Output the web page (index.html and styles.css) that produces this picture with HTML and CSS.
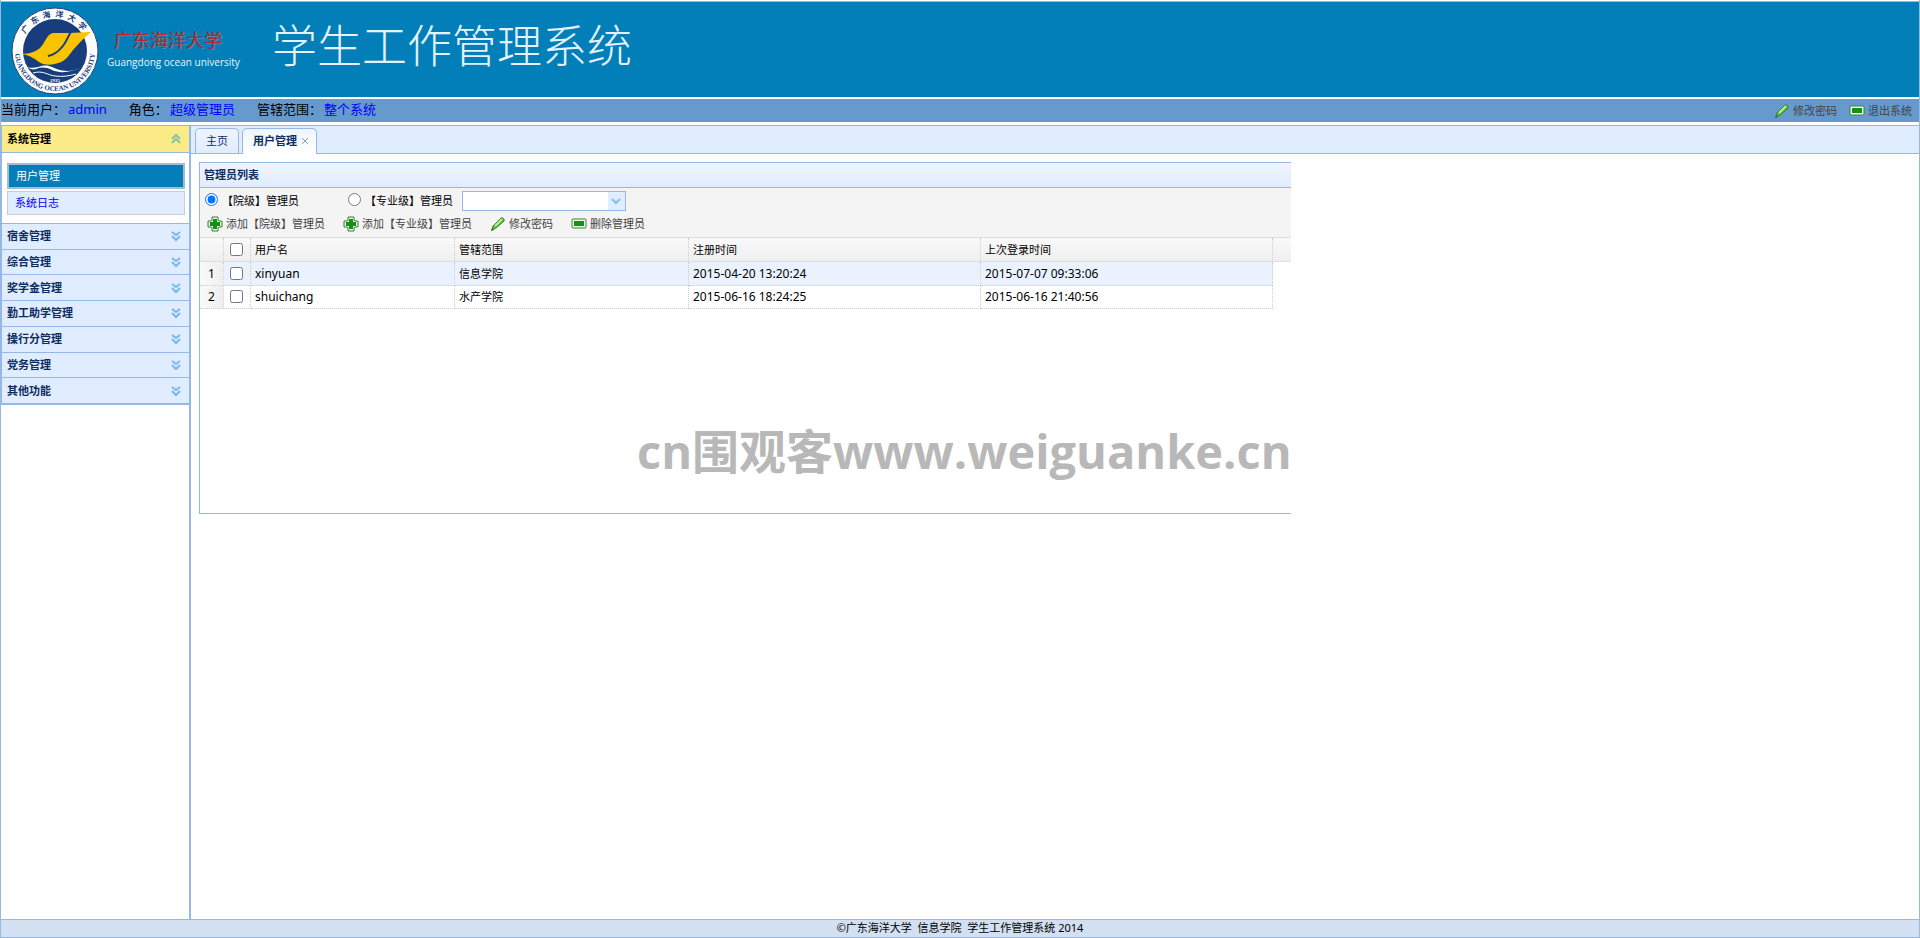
FILE: index.html
```html
<!DOCTYPE html>
<html lang="zh-CN">
<head>
    <meta charset="UTF-8">
    <meta name="viewport" content="width=device-width, initial-scale=1.0">
    <title>学生工作管理系统</title>
    <link rel="stylesheet" href="styles.css">
</head>
<body>
    <!-- shared icons -->
    <svg class="sprite" aria-hidden="true">
        <symbol id="icon-add" viewBox="0 0 16 16">
            <path d="M5 1h6v3l1 1h3v6h-3l-1 1v3H5v-3l-1-1H1V5h3l1-1z" fill="#e4f3e2" stroke="#3b7f3f"/>
            <path d="M6 3h4v3h3v4h-3v3H6v-3H3V6h3z" fill="#129312"/>
        </symbol>
        <symbol id="icon-edit" viewBox="0 0 16 16">
            <path d="M2 14l1-4 8-8c1-1 4 1 3 3l-8 7z" fill="#5cc43a" stroke="#2f7d26"/>
            <path d="M5 10l7-7" stroke="#b9f08c" stroke-width="2"/>
            <path d="M1 15l1-3 2 2z" fill="#555"/>
        </symbol>
        <symbol id="icon-remove" viewBox="0 0 16 16">
            <rect x="1" y="3" width="14" height="9" rx="1" fill="#eef8ec" stroke="#3b7f3f"/>
            <rect x="3" y="5" width="10" height="5" fill="#129312"/>
        </symbol>
        <symbol id="icon-expand" viewBox="0 0 16 16">
            <path d="M4 4l4 3 4-3M4 8l4 4 4-4" fill="none" stroke="#78b8f0" stroke-width="2"/>
        </symbol>
        <symbol id="icon-collapse" viewBox="0 0 16 16">
            <path d="M4 8l4-4 4 4M4 12l4-4 4 4" fill="none" stroke="#8bbfa9" stroke-width="2"/>
        </symbol>
    </svg>

    <header class="banner">
        <svg class="logo" viewBox="0 0 88 88" role="img" aria-label="广东海洋大学">
            <defs>
                <path id="arc-top" d="M10 44a34 34 0 0 1 68 0"/>
                <path id="arc-bottom" d="M4 44a40 40 0 0 0 80 0"/>
            </defs>
            <circle cx="44" cy="44" r="43" fill="#fff" stroke="#23477f"/>
            <circle cx="44" cy="44" r="32" fill="#183d7d"/>
            <path d="M5 46c10 2 18 0 24-5 5-5 7-14 13-15h16l22-1c-6 5-12 11-18 18-5 7-9 12-15 13-5 2-10 2-15 1-6-2-9-9-27-11z" fill="#f8c300"/>
            <path d="M60 25c-3 4-5 11-9 15-4 5-9 8-14 9" fill="none" stroke="#183d7d" stroke-width="2"/>
            <path d="M16 60c9 3 14-3 22-1 9 3 17 9 34 1-12 5-22 7-31 3-6-3-11-3-16-1-3 1-6 0-9-2z" fill="#fff"/>
            <path d="M22 66c10-3 14 2 22 3s14 0 21-2" fill="none" stroke="#fff"/>
            <text class="logo-cn"><textPath href="#arc-top" startOffset="50%">广东海洋大学</textPath></text>
            <text class="logo-en"><textPath href="#arc-bottom" startOffset="50%">GUANGDONG OCEAN UNIVERSITY</textPath></text>
            <text class="logo-year" x="44" y="75">1935</text>
        </svg>
        <div class="school">
            <div class="school-cn">广东海洋大学</div>
            <div class="school-en">Guangdong ocean university</div>
        </div>
        <h1>学生工作管理系统</h1>
    </header>

    <div class="userbar">
        <span class="info">当前用户：<b>admin</b></span>
        <span class="info">角色：<b>超级管理员</b></span>
        <span class="info">管辖范围：<b>整个系统</b></span>
        <div class="userbar-actions">
            <button class="linkbutton"><svg class="icon"><use href="#icon-edit"/></svg>修改密码</button>
            <button class="linkbutton"><svg class="icon"><use href="#icon-remove"/></svg>退出系统</button>
        </div>
    </div>

    <div class="middle">
        <nav class="sidebar">
            <div class="accordion">
                <button class="accordion-header selected">系统管理<svg class="icon"><use href="#icon-collapse"/></svg></button>
                <div class="accordion-body">
                    <a class="current" href="#">用户管理</a>
                    <a href="#">系统日志</a>
                </div>
                <div class="accordion-closed">
                    <button class="accordion-header">宿舍管理<svg class="icon"><use href="#icon-expand"/></svg></button>
                    <button class="accordion-header">综合管理<svg class="icon"><use href="#icon-expand"/></svg></button>
                    <button class="accordion-header">奖学金管理<svg class="icon"><use href="#icon-expand"/></svg></button>
                    <button class="accordion-header">勤工助学管理<svg class="icon"><use href="#icon-expand"/></svg></button>
                    <button class="accordion-header">操行分管理<svg class="icon"><use href="#icon-expand"/></svg></button>
                    <button class="accordion-header">党务管理<svg class="icon"><use href="#icon-expand"/></svg></button>
                    <button class="accordion-header">其他功能<svg class="icon"><use href="#icon-expand"/></svg></button>
                </div>
            </div>
        </nav>

        <main class="content">
            <div class="tabs">
                <button class="tab">主页</button>
                <button class="tab active">用户管理<svg class="close" viewBox="0 0 6 6"><path d="M0 0l6 6M6 0l-6 6"/></svg></button>
            </div>

            <section class="panel">
                <h2>管理员列表</h2>
                <div class="toolbar">
                    <div class="filters">
                        <label class="level"><input type="radio" name="level" checked>【院级】管理员</label>
                        <label class="level"><input type="radio" name="level">【专业级】管理员</label>
                        <div class="combo">
                            <select aria-label="学院"><option></option></select>
                            <svg viewBox="0 0 10 8"><path d="M1 2l4 4 4-4"/></svg>
                        </div>
                    </div>
                    <div class="actions">
                        <button class="linkbutton"><svg class="icon"><use href="#icon-add"/></svg>添加【院级】管理员</button>
                        <button class="linkbutton"><svg class="icon"><use href="#icon-add"/></svg>添加【专业级】管理员</button>
                        <button class="linkbutton"><svg class="icon"><use href="#icon-edit"/></svg>修改密码</button>
                        <button class="linkbutton"><svg class="icon"><use href="#icon-remove"/></svg>删除管理员</button>
                    </div>
                </div>
                <table class="datagrid">
                    <colgroup>
                        <col class="col-number">
                        <col class="col-check">
                        <col class="col-name">
                        <col class="col-scope">
                        <col class="col-time">
                        <col class="col-time">
                        <col>
                    </colgroup>
                    <thead>
                        <tr>
                            <th></th>
                            <th class="check"><input type="checkbox" aria-label="全选"></th>
                            <th>用户名</th>
                            <th>管辖范围</th>
                            <th>注册时间</th>
                            <th>上次登录时间</th>
                            <th></th>
                        </tr>
                    </thead>
                    <tbody>
                        <tr class="hover">
                            <td class="number">1</td>
                            <td class="check"><input type="checkbox" aria-label="xinyuan"></td>
                            <td>xinyuan</td>
                            <td class="scope">信息学院</td>
                            <td>2015-04-20 13:20:24</td>
                            <td>2015-07-07 09:33:06</td>
                            <td class="rest"></td>
                        </tr>
                        <tr>
                            <td class="number">2</td>
                            <td class="check"><input type="checkbox" aria-label="shuichang"></td>
                            <td>shuichang</td>
                            <td class="scope">水产学院</td>
                            <td>2015-06-16 18:24:25</td>
                            <td>2015-06-16 21:40:56</td>
                            <td class="rest"></td>
                        </tr>
                    </tbody>
                </table>
                <div class="watermark">cn围观客www.weiguanke.cn</div>
            </section>
        </main>
    </div>

    <footer>©广东海洋大学&nbsp; 信息学院&nbsp; 学生工作管理系统 2014</footer>
</body>
</html>
```
FILE: styles.css
```css
* {
    box-sizing: border-box;
}

body {
    display: flex;
    flex-direction: column;
    min-height: 100vh;
    margin: 0;
    padding-top: 1px;
    border: 1px solid #95b8e7;
    border-top: 0;
    background: #fff;
    color: #000;
    font-family: "Noto Sans", "Noto Sans CJK SC", sans-serif;
    font-size: 11px;
    line-height: 16px;
}

h1, h2 {
    margin: 0;
}

button {
    padding: 0;
    border: 0;
    background: none;
    font: inherit;
    cursor: pointer;
}

.sprite {
    display: none;
}

.icon {
    width: 16px;
    height: 16px;
    flex: none;
}

/* banner */
.banner {
    display: flex;
    align-items: flex-start;
    height: 96px;
    padding-left: 10px;
    border-top: 1px solid #95b8e7;
    background: #027eb8;
}

.logo {
    width: 88px;
    height: 88px;
    margin-top: 5px;
}

.logo text {
    text-anchor: middle;
    font-family: "Liberation Serif", "Noto Sans CJK SC", serif;
    font-weight: bold;
    fill: #183d7d;
}

.logo .logo-cn {
    font-size: 8px;
    letter-spacing: 4px;
}

.logo .logo-en {
    font-size: 7px;
}

.logo .logo-year {
    font-size: 5px;
    fill: #fff;
}

.school {
    width: 173px;
    padding: 26px 0 0 8px;
}

.school-cn {
    padding-left: 7px;
    color: #b3262b;
    font-size: 18px;
    line-height: 24px;
    text-shadow: 1px 1px 0 #5b83a3;
}

.school-en {
    padding-top: 2px;
    color: #e8f4ff;
    font-family: "Open Sans", sans-serif;
    font-size: 10px;
    line-height: 16px;
    white-space: nowrap;
}

.banner h1 {
    padding-top: 10px;
    color: #e4f2ff;
    font-family: "Noto Sans CJK SC", sans-serif;
    font-size: 45px;
    font-weight: 300;
    line-height: 64px;
}

/* current user */
.userbar {
    display: flex;
    align-items: center;
    gap: 22px;
    height: 23px;
    margin-top: 2px;
    background: #6699cc;
    font-size: 13px;
}

.info {
    height: 20px;
}

.info b {
    margin-left: 2px;
    color: #0000ff;
    font-weight: normal;
}

.userbar-actions {
    display: flex;
    gap: 12px;
    margin-left: auto;
    padding-right: 7px;
}

.linkbutton {
    display: flex;
    align-items: center;
    gap: 3px;
    color: #444;
    font-size: 11px;
    line-height: 16px;
}

/* left menu */
.middle {
    display: flex;
    flex: 1;
    margin-top: 3px;
}

.sidebar {
    width: 190px;
    flex: none;
    border: solid #95b8e7;
    border-width: 1px 2px 0 0;
}

.accordion {
    border: solid #95b8e7;
    border-width: 0 0 1px 1px;
}

.accordion-header {
    display: flex;
    align-items: center;
    justify-content: space-between;
    width: 100%;
    padding: 0 5px;
    border-bottom: 1px solid #95b8e7;
    background: #e0ecff;
    color: #0e2d5f;
    font-weight: bold;
}

.accordion-header.selected {
    height: 27px;
    background: #fbec88;
    color: #000;
}

.accordion-body {
    display: flex;
    flex-direction: column;
    gap: 2px;
    height: 70px;
    padding: 10px 4px 0 5px;
}

.accordion-body a {
    height: 24px;
    padding: 3px 7px;
    border: 1px solid #c8ccd6;
    background: #e0ecff;
    color: #0000ee;
    text-decoration: none;
}

.accordion-body a.current {
    height: 26px;
    border: 2px solid #a7b9d8;
    background: #027eb8;
    color: #fff;
}

.accordion-closed {
    display: grid;
    grid-auto-rows: 1fr;
    height: 181px;
    border-top: 1px solid #95b8e7;
}

/* tabs */
.content {
    flex: 1;
    min-width: 0;
}

.tabs {
    display: flex;
    gap: 3px;
    height: 29px;
    padding: 2px 0 0 4px;
    border: solid #95b8e7;
    border-width: 1px 0;
    background: #e0ecff;
}

.tab {
    display: flex;
    align-items: center;
    gap: 5px;
    height: 25px;
    padding: 0 10px 1px;
    border: 1px solid #95b8e7;
    border-bottom: 0;
    border-radius: 5px 5px 0 0;
    background: linear-gradient(#eff5ff, #e0ecff);
    color: #0e2d5f;
}

.tab.active {
    height: 26px;
    padding: 0 8px 2px 10px;
    background: linear-gradient(#eff5ff, #fff);
    font-weight: bold;
}

.close {
    width: 6px;
    height: 6px;
    fill: none;
    stroke: #7d9fd0;
}

/* admin list */
.panel {
    position: relative;
    width: 1092px;
    max-width: 100%;
    min-height: 352px;
    margin: 8px 0 0 8px;
    border: solid #95b8e7;
    border-width: 1px 0 1px 1px;
}

.panel h2 {
    height: 25px;
    padding: 4px 4px 0;
    border-bottom: 1px solid #95b8e7;
    background: linear-gradient(#eff5ff, #e0ecff);
    color: #0e2d5f;
    font-size: 11px;
    line-height: 16px;
}

.toolbar {
    height: 50px;
    padding: 3px 5px 0;
    border-bottom: 1px solid #ddd;
    background: #f4f4f4;
}

.filters {
    display: flex;
    height: 20px;
}

.level {
    display: flex;
    align-items: center;
    gap: 4px;
    width: 143px;
    line-height: 20px;
    white-space: nowrap;
}

.level + .level {
    width: 114px;
}

.level input {
    width: 13px;
    height: 13px;
    margin: 0 0 4px;
}

.combo {
    position: relative;
    width: 164px;
    height: 20px;
}

.combo select {
    width: 100%;
    height: 100%;
    border: 1px solid #95b8e7;
    border-radius: 0;
    background: linear-gradient(to left, #e0ecff 17px, #fff 17px);
    appearance: none;
}

.combo svg {
    position: absolute;
    top: 6px;
    right: 5px;
    width: 10px;
    height: 8px;
    fill: none;
    stroke: #7cc0f0;
    stroke-width: 2px;
    pointer-events: none;
}

.actions {
    display: flex;
    gap: 18px;
    padding: 5px 2px;
}

.datagrid {
    width: 1091px;
    table-layout: fixed;
    border-collapse: separate;
    border-spacing: 0;
}

.col-number { width: 24px; }
.col-check { width: 27px; }
.col-name { width: 204px; }
.col-scope { width: 234px; }
.col-time { width: 292px; }

th, td {
    height: 23px;
    padding: 0 4px;
    border: dotted #ccc;
    border-width: 0 1px 1px 0;
    text-align: left;
    font-weight: normal;
}

th {
    height: 24px;
    border-bottom: 1px solid #ddd;
    background: linear-gradient(#f9f9f9, #efefef);
}

th:last-child {
    border-right: 0;
}

td {
    font-size: 12px;
}

td.scope {
    font-size: 11px;
}

.hover td {
    height: 24px;
    background: #eaf2ff;
}

.datagrid .check {
    padding: 0 1px 0 0;
}

.check input {
    display: block;
    width: 13px;
    height: 13px;
    margin: 0 auto 1px;
}

.datagrid .number {
    background: linear-gradient(to right, #fafafa, #efefef);
    text-align: center;
}

.datagrid .rest {
    border: 0;
    background: none;
}

.watermark {
    position: absolute;
    top: 256px;
    left: 437px;
    color: #b8b8b8;
    font-family: "Open Sans", "Noto Sans CJK SC", sans-serif;
    font-size: 47px;
    font-weight: bold;
    line-height: 64px;
    white-space: nowrap;
    pointer-events: none;
}

footer {
    height: 18px;
    border-top: 1px solid #95b8e7;
    background: #d2e0f2;
    line-height: 16px;
    text-align: center;
}
```
